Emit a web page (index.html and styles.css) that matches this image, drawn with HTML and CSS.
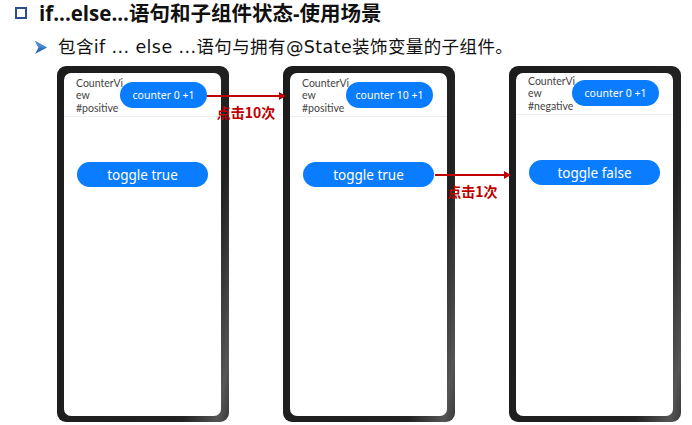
FILE: index.html
```html
<!DOCTYPE html>
<html lang="zh">
<head>
<meta charset="utf-8">
<link rel="stylesheet" href="styles.css">
</head>
<body>
<div class="slide">
  <h1 class="title"><span class="square"></span>if...else...语句和子组件状态-使用场景</h1>
  <p class="bullet"><svg class="arrowhead" width="12" height="13" viewBox="0 0 12 13"><polygon points="0,0 12,6.5 0,13 3.5,6.5" fill="#2d6cc0"/><polygon points="0,0 12,6.5 3.5,6.5" fill="#4f8ad6"/></svg>包含if ... else ...语句与拥有@State装饰变量的子组件。</p>
  <div class="phones">
    <div class="phone">
      <div class="screen">
        <div class="head">
          <div class="label">CounterVi<br>ew<br>#positive</div>
          <div class="counter">counter 0 +1</div>
        </div>
        <div class="toggle">toggle true</div>
      </div>
    </div>
    <div class="phone">
      <div class="screen">
        <div class="head">
          <div class="label">CounterVi<br>ew<br>#positive</div>
          <div class="counter">counter 10 +1</div>
        </div>
        <div class="toggle">toggle true</div>
      </div>
    </div>
    <div class="phone phone-up">
      <div class="screen">
        <div class="head">
          <div class="label">CounterVi<br>ew<br>#negative</div>
          <div class="counter">counter 0 +1</div>
        </div>
        <div class="toggle">toggle false</div>
      </div>
    </div>
    <div class="step step-one"><div class="line"></div><span class="note">点击10次</span></div>
    <div class="step step-two"><div class="line"></div><span class="note">点击1次</span></div>
  </div>
</div>
</body>
</html>
```

FILE: styles.css
```css
html, body {
  margin: 0;
  padding: 0;
  background: #ffffff;
}
.slide {
  width: 692px;
  height: 425px;
  overflow: hidden;
  font-family: "Open Sans", "Noto Sans CJK SC", sans-serif;
  color: #111;
}
.title {
  margin: 0;
  padding: 0 0 0 15px;
  display: flex;
  align-items: center;
  font-family: "Open Sans", "Noto Sans CJK SC", sans-serif;
  font-size: 20.5px;
  line-height: 26px;
  font-weight: 700;
  color: #111;
}
.square {
  width: 8px;
  height: 8px;
  border: 2.5px solid #2a4f8f;
  margin-right: 12px;
  flex: none;
}
.bullet {
  margin: 9px 0 0 35px;
  display: flex;
  align-items: center;
  font-family: "DejaVu Sans", "Noto Sans CJK SC", sans-serif;
  font-size: 17.5px;
  letter-spacing: 0.4px;
  line-height: 24px;
  color: #111;
}
.arrowhead {
  flex: none;
  margin-right: 11px;
  margin-top: 1px;
}
.phones {
  position: relative;
  display: flex;
  gap: 54px;
  margin: 7px 0 0 57px;
}
.phone {
  width: 172px;
  height: 356px;
  box-sizing: border-box;
  padding: 7px 10px 6px 7px;
  border-radius: 9px;
  background: linear-gradient(100deg, #1c1c1c 0%, #222 80%, #555 95%, #3a3a3a 100%);
  display: flex;
}
.screen {
  flex: 1;
  background: #fff;
  border-radius: 7px;
  display: flex;
  flex-direction: column;
  align-items: center;
  font-family: "Noto Sans", "Open Sans", sans-serif;
}
.phone-up .head {
  margin-top: -2px;
}
.head {
  align-self: stretch;
  height: 44px;
  border-bottom: 1px solid #eeeeee;
  display: flex;
  align-items: center;
  justify-content: space-between;
  padding: 0 14px 0 12px;
  box-sizing: border-box;
}
.label {
  font-family: "Lato", "Noto Sans", sans-serif;
  font-size: 10.5px;
  line-height: 12.5px;
  color: #444;
  width: 44px;
  margin-top: 2px;
}
.counter {
  width: 87px;
  height: 26px;
  border-radius: 13px;
  background: #0a7cff;
  color: #fff;
  font-size: 10.5px;
  display: flex;
  align-items: center;
  justify-content: center;
}
.toggle {
  margin-top: 45px;
  width: 131px;
  height: 25px;
  border-radius: 13px;
  background: #0a7cff;
  color: #fff;
  font-size: 13.5px;
  display: flex;
  align-items: center;
  justify-content: center;
}
.step {
  position: absolute;
  display: flex;
  flex-direction: column;
  align-items: center;
}
.step-one {
  left: 150px;
  top: 29px;
  width: 78px;
}
.step-two {
  left: 378px;
  top: 108px;
  width: 75px;
}
.line {
  align-self: stretch;
  height: 2px;
  background: #c00000;
  position: relative;
}
.line::after {
  content: "";
  position: absolute;
  right: -1px;
  top: -3px;
  border-left: 7px solid #c00000;
  border-top: 4px solid transparent;
  border-bottom: 4px solid transparent;
}
.note {
  margin-top: 7px;
  font-family: "Noto Sans CJK SC", sans-serif;
  font-weight: 700;
  font-size: 14px;
  line-height: 16px;
  color: #c00000;
}
```
